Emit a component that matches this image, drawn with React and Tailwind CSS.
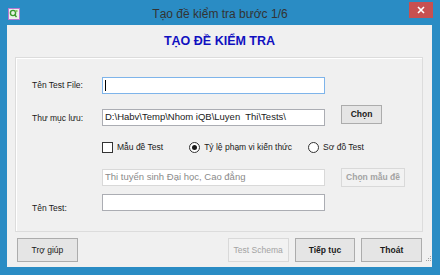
const Btn = ({ children, className = "", disabled }) => (
  <div
    className={
      "flex items-center justify-center border text-[8.5px] " +
      (disabled
        ? "border-[#d9d9d9] bg-[#f2f2f2] text-[#a3a3a3] "
        : "border-[#acacac] bg-[#e5e5e5] text-[#1a1a1a] ") +
      className
    }
  >
    {children}
  </div>
);

const Field = ({ children, className = "", focused, disabled }) => (
  <div
    className={
      "flex h-[17px] w-[223px] items-center whitespace-pre border bg-white px-[2px] text-[9.5px] " +
      (focused
        ? "border-[#7eb4ea] "
        : disabled
        ? "border-[#d9d9d9] text-[#8a8a8a] "
        : "border-[#abadb3] text-[#1a1a1a] ") +
      className
    }
  >
    {children}
  </div>
);

export default function App() {
  return (
    <div className="flex h-[275px] w-[440px] flex-col bg-[#2a8cc4] font-['Liberation_Sans',Arial,sans-serif] text-[#1a1a1a]">
      {/* title bar */}
      <div className="grid h-[25px] grid-cols-[1fr_auto_1fr] items-start">
        <div className="pl-[8px] pt-[8px]">
          <svg width="12" height="12" viewBox="0 0 12 12">
            <rect x="0.5" y="0.5" width="11" height="11" fill="#f4eef8" stroke="#b678d0" />
            <rect x="1.5" y="1.5" width="9" height="9" fill="#e8f2e4" />
            <circle cx="5" cy="5" r="2.6" fill="none" stroke="#3c9a2e" strokeWidth="1.4" />
            <path d="M6.5 6.5 L8.5 9" stroke="#3c9a2e" strokeWidth="1.4" />
            <rect x="7.5" y="2" width="2" height="2" fill="#8fc46a" />
          </svg>
        </div>
        <div className="pt-[7px] text-[12px] leading-[15px] text-[#333]">
          Tạo đề kiểm tra bước 1/6
        </div>
        <div className="flex justify-end pr-[7px] pt-[2px]">
          <div className="flex h-[16px] w-[24px] items-center justify-center bg-[#c75050]">
            <svg width="8" height="8" viewBox="0 0 8 8">
              <path d="M1 1 L7 7 M7 1 L1 7" stroke="#fff" strokeWidth="1.6" />
            </svg>
          </div>
        </div>
      </div>

      {/* client area */}
      <div className="mx-[7px] flex h-[242px] w-[425px] flex-col bg-[#f0f0f0]">
        <div className="mt-[8px] h-[16px] text-center text-[12.5px] font-bold leading-[16px] text-[#1010c0]">
          TẠO ĐỀ KIỂM TRA
        </div>

        {/* group box */}
        <div className="ml-[8px] mt-[8px] flex h-[175px] w-[408px] flex-col border border-[#dcdcdc] pl-[16px] shadow-[inset_1px_1px_0_#ffffff]">
          <div className="mt-[19px] flex h-[17px] items-center">
            <div className="w-[70px] text-[8.5px]">Tên Test File:</div>
            <Field focused>
              <div className="h-[11px] w-px bg-[#000]" />
            </Field>
          </div>

          <div className="mt-[11px] flex h-[21px] items-start">
            <div className="mt-[7px] w-[70px] text-[8.5px]">Thư mục lưu:</div>
            <Field className="mt-[4px]">D:\Habv\Temp\Nhom iQB\Luyen  Thi\Tests\</Field>
            <Btn className="ml-[16px] h-[19px] w-[41px] font-bold">Chọn</Btn>
          </div>

          <div className="mt-[15px] flex h-[12px] items-center pl-[70px] text-[8.5px]">
            <div className="h-[11px] w-[11px] border border-[#333] bg-white" />
            <span className="ml-[4px]">Mẫu đề Test</span>
            <div className="ml-[26px] flex h-[11px] w-[11px] items-center justify-center rounded-full border border-[#333] bg-white">
              <div className="h-[5px] w-[5px] rounded-full bg-[#1a1a1a]" />
            </div>
            <span className="ml-[4px]">Tỷ lệ phạm vi kiến thức</span>
            <div className="ml-[16px] h-[11px] w-[11px] rounded-full border border-[#333] bg-white" />
            <span className="ml-[4px]">Sơ đồ Test</span>
          </div>

          <div className="mt-[15px] flex h-[19px] items-center pl-[70px]">
            <Field disabled>Thi tuyển sinh Đại học, Cao đẳng</Field>
            <Btn disabled className="ml-[16px] h-[19px] w-[64px] font-bold">
              Chọn mẫu đề
            </Btn>
          </div>

          <div className="mt-[7px] flex h-[17px] items-start">
            <div className="mt-[8px] w-[70px] text-[8.5px]">Tên Test:</div>
            <Field />
          </div>
        </div>

        {/* bottom buttons */}
        <div className="mt-[6px] flex h-[24px] items-start">
          <Btn className="ml-[10px] h-[24px] w-[61px]">Trợ giúp</Btn>
          <Btn disabled className="ml-[150px] h-[24px] w-[61px]">Test Schema</Btn>
          <Btn className="ml-[6px] h-[24px] w-[61px] font-bold">Tiếp tục</Btn>
          <Btn className="ml-[6px] h-[24px] w-[61px] font-bold">Thoát</Btn>
          <svg className="ml-[2px] mt-[16px]" width="8" height="8" viewBox="0 0 8 8">
            <rect x="6" y="2" width="1" height="1" fill="#a0a0a0" />
            <rect x="4" y="4" width="1" height="1" fill="#a0a0a0" />
            <rect x="6" y="4" width="1" height="1" fill="#a0a0a0" />
            <rect x="2" y="6" width="1" height="1" fill="#a0a0a0" />
            <rect x="4" y="6" width="1" height="1" fill="#a0a0a0" />
            <rect x="6" y="6" width="1" height="1" fill="#a0a0a0" />
          </svg>
        </div>
      </div>
    </div>
  );
}
